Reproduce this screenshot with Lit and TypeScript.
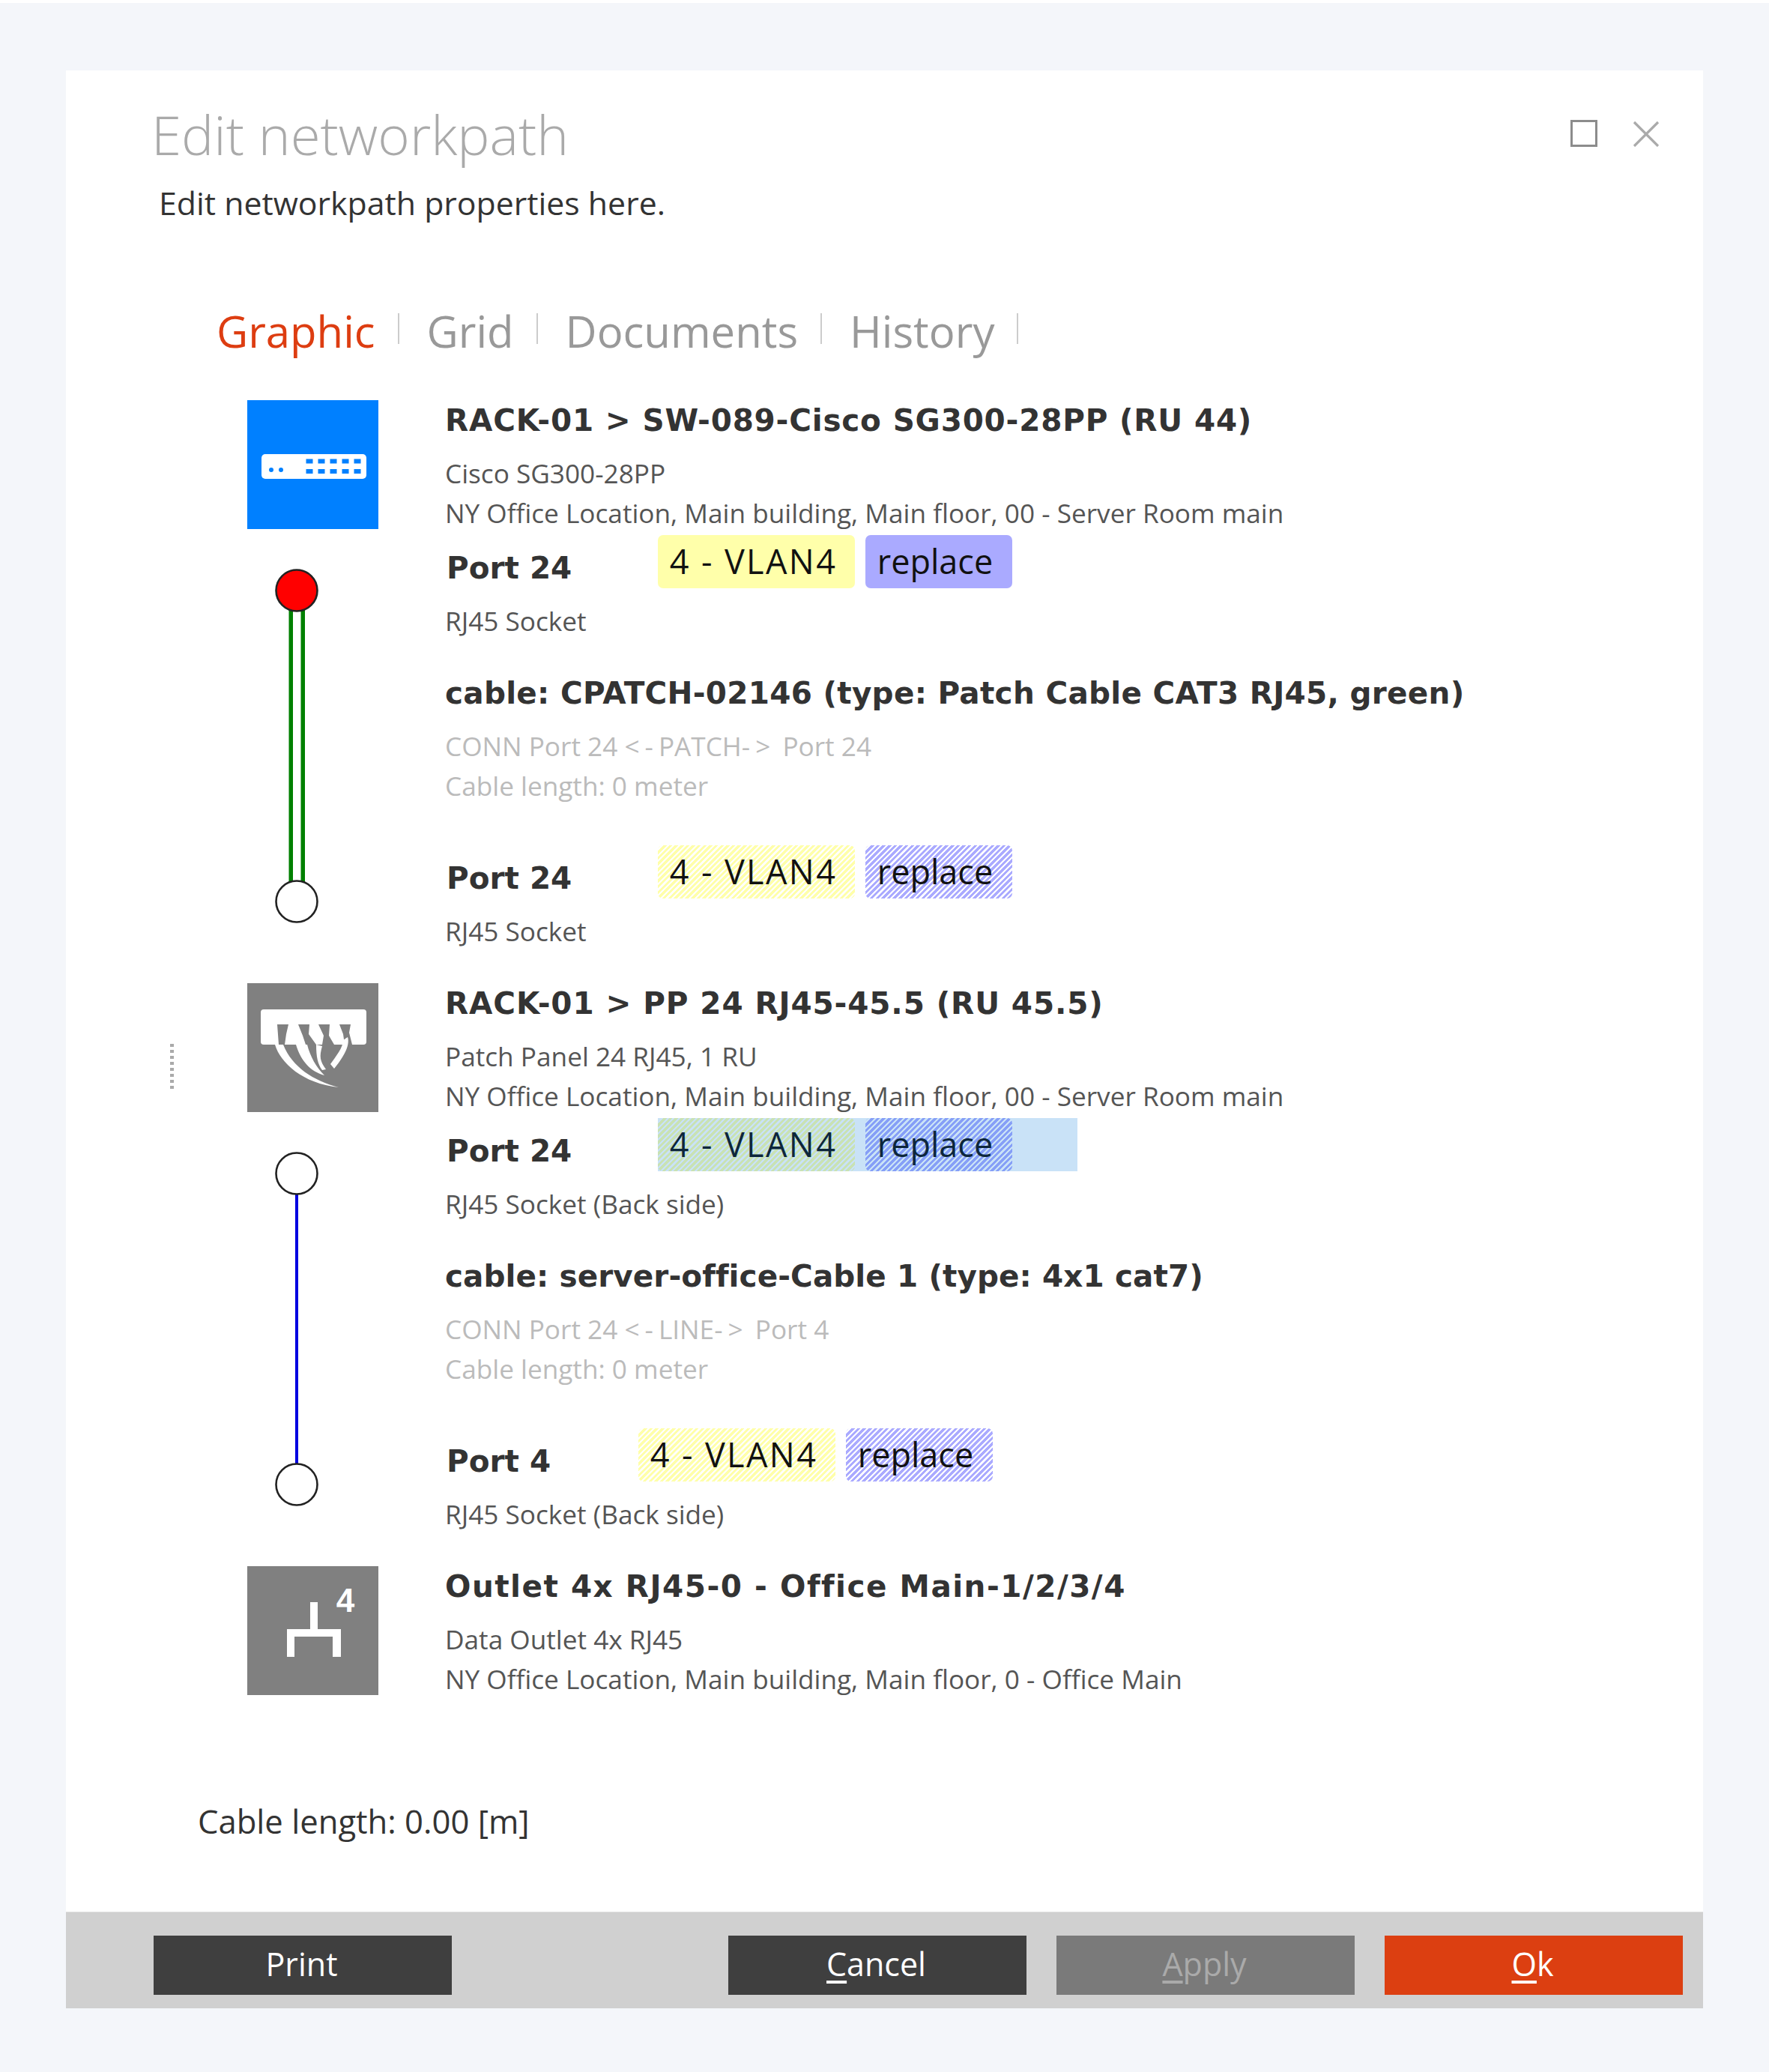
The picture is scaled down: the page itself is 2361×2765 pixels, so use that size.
import { LitElement, html, css, svg } from "lit";
import { customElement, property } from "lit/decorators.js";

const FONT = css`"Open Sans", "Noto Sans", sans-serif`;
const BOLD = css`"DejaVu Sans", "Open Sans", sans-serif`;

@customElement("port-row")
class PortRow extends LitElement {
  @property() label = "";
  @property() sub = "";
  @property({ type: Boolean }) hatched = false;
  @property({ type: Boolean }) selected = false;
  @property({ type: Boolean }) short = false;
  static styles = css`
    :host { display: block; font-family: ${FONT}; }
    .row { display: flex; align-items: flex-start; height: 73px; padding-top: 2px; box-sizing: border-box; }
    .label { font-family: ${BOLD}; font-weight: 700; font-size: 40.5px; line-height: 54px; color: #333; margin-top: 17px; margin-left: 2px; width: 280px; flex: none; }
    .label.short { width: 254px; }
    .badges { display: flex; gap: 14px; position: relative; margin-left: 2px; }
    .badges.selected { width: 560px; }
    .badges.selected::after { content: ""; position: absolute; inset: 0; background: rgba(0, 120, 215, 0.21); }
    .badge { height: 71px; line-height: 70px; font-size: 45px; color: #111; text-align: center; border-radius: 7px; box-sizing: border-box; }
    .vlan { width: 263px; background: #ffffaa; letter-spacing: 2.4px; padding-right: 8px; }
    .rep { width: 196px; background: #aaaaff; padding-right: 10px; }
    .hatched .vlan { background: repeating-linear-gradient(135deg, #ffffaa 0 3.2px, #ffffff 3.2px 5.4px); }
    .hatched .rep { background: repeating-linear-gradient(135deg, #aaaaff 0 3.2px, #ffffff 3.2px 5.4px); }
    .selected.hatched .vlan { background: repeating-linear-gradient(135deg, #ffffaa 0 3.2px, transparent 3.2px 5.4px); }
    .selected.hatched .rep { background: repeating-linear-gradient(135deg, #aaaaff 0 3.2px, transparent 3.2px 5.4px); }
    .sub { font-size: 35.2px; line-height: 53px; color: #555; margin-top: 17px; }
  `;
  render() {
    const cls = `badges ${this.hatched ? "hatched" : ""} ${this.selected ? "selected" : ""}`;
    return html`<div class="row">
        <div class="label ${this.short ? "short" : ""}">${this.label}</div>
        <div class=${cls}><div class="badge vlan">4 - VLAN4</div><div class="badge rep">replace</div></div>
      </div>
      <div class="sub">${this.sub}</div>`;
  }
}

@customElement("device-row")
class DeviceRow extends LitElement {
  @property() name = "";
  @property() model = "";
  @property() place = "";
  @property({ type: Number }) track = 0;
  static styles = css`
    :host { display: flex; height: 178px; font-family: ${FONT}; }
    .icon { width: 175px; height: 172px; flex: none; margin-right: 89px; }
    .icon ::slotted(svg) { display: block; }
    .title { font-family: ${BOLD}; font-weight: 700; font-size: 40.5px; line-height: 54px; color: #333; white-space: nowrap; }
    .sub { font-size: 35.2px; line-height: 53px; color: #555; white-space: nowrap; }
    .first { margin-top: 17px; }
  `;
  render() {
    return html`<div class="icon"><slot></slot></div>
      <div>
        <div class="title" style="letter-spacing:${this.track}px">${this.name}</div>
        <div class="sub first">${this.model}</div>
        <div class="sub">${this.place}</div>
      </div>`;
  }
}

@customElement("path-segment")
class PathSegment extends LitElement {
  @property() kind = "patch";
  @property() cableName = "";
  @property() from = "";
  @property() link = "";
  @property() to = "";
  @property({ type: Number }) track = 0;
  static styles = css`
    :host { display: flex; height: 600px; font-family: ${FONT}; }
    svg { flex: none; display: block; }
    .cable { margin-top: 43px; }
    .title { font-family: ${BOLD}; font-weight: 700; font-size: 40.5px; line-height: 54px; color: #333; white-space: nowrap; }
    .sub { font-size: 35.2px; line-height: 53px; color: #bbb; white-space: nowrap; }
    .first { margin-top: 17px; }
    .arrow { letter-spacing: 7px; }
    .end { margin-top: 51px; }
  `;
  render() {
    const patch = this.kind === "patch";
    return html`<svg width="264" height="600" viewBox="0 0 264 600">
        ${patch
          ? svg`<rect x="55.5" y="100" width="5.5" height="370" fill="#008000"/><rect x="71.5" y="100" width="5.5" height="370" fill="#008000"/>`
          : svg`<rect x="64" y="100" width="4" height="370" fill="#0000e0"/>`}
        <circle cx="66" cy="76" r="27.5" fill=${patch ? "#ff0000" : "#fff"} stroke="#222" stroke-width="2.6"/>
        <circle cx="66" cy="491" r="27.5" fill="#fff" stroke="#222" stroke-width="2.6"/>
      </svg>
      <div>
        <slot name="top"></slot>
        <div class="cable">
          <div class="title" style="letter-spacing:${this.track}px">${this.cableName}</div>
          <div class="sub first">CONN ${this.from} <span class="arrow">&lt;-</span>${this.link}<span class="arrow">-&gt;</span> ${this.to}</div>
          <div class="sub">Cable length: 0 meter</div>
        </div>
        <div class="end"><slot name="bottom"></slot></div>
      </div>`;
  }
}

@customElement("app-root")
class AppRoot extends LitElement {
  static styles = css`
    :host { display: block; box-sizing: border-box; width: 2361px; height: 2765px; background: #f4f6fa; border-top: 4px solid #fff; padding: 90px 0 0 88px; font-family: ${FONT}; }
    .dialog { width: 2185px; height: 2586px; background: #fff; display: flex; flex-direction: column; position: relative; }
    .head { display: flex; justify-content: space-between; padding: 35px 58px 0 114px; }
    h1 { margin: 0; font-weight: 300; font-size: 72.6px; line-height: 100px; color: #aaa; }
    .desc { font-size: 42.8px; line-height: 60px; color: #333; margin: 12px 0 0 124px; }
    .ctrl { display: flex; gap: 47px; margin-top: 31px; height: 36px; }
    .tabs { display: flex; margin: 101px 0 0 201px; }
    .tab { font-size: 58px; line-height: 80px; color: #999; font-weight: 400; padding: 0 32px 0 37px; position: relative; white-space: nowrap; }
    .tab:first-child { padding-left: 0; }
    .tab::after { content: ""; position: absolute; right: 0; top: 16px; height: 41px; width: 2px; background: #ccc; }
    .tab.active { color: #dd3d11; }
    .path { margin: 52px 0 0 242px; }
    .handle { position: absolute; left: 139px; top: 1299px; width: 5px; height: 62px; background: repeating-linear-gradient(180deg, #aaa 0 4px, transparent 4px 8px); }
    .total { font-size: 43.6px; line-height: 60px; color: #333; margin: 132px 0 0 176px; }
    .foot { margin-top: auto; height: 129px; box-sizing: border-box; background: #d0d0d0; border-top: 1px solid #e0e0e0; padding: 31px 25px 0 117px; display: flex; gap: 40px; }
    .btn { width: 398px; height: 79px; line-height: 74px; text-align: center; font-size: 43px; color: #fff; background: #3f3f3f; border: 0; padding: 0 3px 3px 0; font-family: inherit; }
    .btn u { text-underline-offset: 6px; }
    .print { margin-right: 329px; }
    .apply { background: #7a7a7a; color: #aaa; }
    .ok { background: #dc3f11; }
  `;
  render() {
    return html`<div class="dialog">
      <div class="head">
        <h1>Edit networkpath</h1>
        <div class="ctrl">
          <svg width="36" height="36" viewBox="0 0 36 36"><rect x="1.5" y="1.5" width="33" height="33" fill="none" stroke="#8c8c8c" stroke-width="3"/></svg>
          <svg width="36" height="36" viewBox="0 0 36 36"><path d="M2 3 L34 35 M34 3 L2 35" fill="none" stroke="#aaa" stroke-width="3.2"/></svg>
        </div>
      </div>
      <div class="desc">Edit networkpath properties here.</div>
      <div class="tabs">
        <div class="tab active">Graphic</div>
        <div class="tab">Grid</div>
        <div class="tab">Documents</div>
        <div class="tab">History</div>
      </div>
      <div class="path">
        <device-row track="0.8" name="RACK-01 > SW-089-Cisco SG300-28PP (RU 44)" model="Cisco SG300-28PP" place="NY Office Location, Main building, Main floor, 00 - Server Room main">
          <svg width="175" height="172" viewBox="0 0 175 172">
            <rect width="175" height="172" fill="#0080ff"/>
            <rect x="19" y="72" width="140" height="33" rx="5" fill="#fff"/>
            <circle cx="32" cy="93" r="3" fill="#0080ff"/><circle cx="45" cy="93" r="3" fill="#0080ff"/>
            ${[83, 99, 115, 131, 147].map((x) => svg`<rect x=${x - 4.5} y="78.5" width="9" height="6" fill="#0080ff"/><rect x=${x - 4.5} y="92" width="9" height="6" fill="#0080ff"/>`)}
          </svg>
        </device-row>
        <path-segment track="0.28" kind="patch" cableName="cable: CPATCH-02146 (type: Patch Cable CAT3 RJ45, green)" from="Port 24" link="PATCH" to="Port 24">
          <port-row slot="top" label="Port 24" sub="RJ45 Socket"></port-row>
          <port-row slot="bottom" label="Port 24" sub="RJ45 Socket" hatched></port-row>
        </path-segment>
        <device-row track="0.88" name="RACK-01 > PP 24 RJ45-45.5 (RU 45.5)" model="Patch Panel 24 RJ45, 1 RU" place="NY Office Location, Main building, Main floor, 00 - Server Room main">
          <svg width="175" height="172" viewBox="0 0 175 172">
            <rect width="175" height="172" fill="#808080"/>
            <rect x="18" y="35" width="141" height="47" rx="4" fill="#fff"/>
            <path d="M40 55 H55 L52 68 L50 82 H42 Z M68 55 H83 L82 68 L92 82 H78 L74 70 Z M95 55 H110 L109 70 L116 82 H100 L102 70 Z M123 55 H138 L136 66 L140 82 H130 L128 68 Z" fill="#808080"/>
            <path d="M37 82 C44 106 74 134 122 139 C88 130 60 112 48 82 Z M65 82 C72 105 85 118 103 123 C92 112 84 98 80 82 Z M92 82 L100 84 C96 98 97 104 105 115 L100 116 C94 108 92 98 92 82 Z M128 76 L134 72 C138 84 126 102 116 114 L111 108 C118 98 128 86 128 76 Z" fill="#fff"/>
          </svg>
        </device-row>
        <path-segment track="0.08" kind="line" cableName="cable: server-office-Cable 1 (type: 4x1 cat7)" from="Port 24" link="LINE" to="Port 4">
          <port-row slot="top" label="Port 24" sub="RJ45 Socket (Back side)" hatched selected></port-row>
          <port-row slot="bottom" label="Port 4" sub="RJ45 Socket (Back side)" hatched short></port-row>
        </path-segment>
        <device-row track="1.5" name="Outlet 4x RJ45-0 - Office Main-1/2/3/4" model="Data Outlet 4x RJ45" place="NY Office Location, Main building, Main floor, 0 - Office Main">
          <svg width="175" height="172" viewBox="0 0 175 172">
            <rect width="175" height="172" fill="#808080"/>
            <path d="M84 48 H94 V84 H125 V121 H114 V94 H63 V121 H53 V84 H84 Z" fill="#fff"/>
            <text x="131" y="61" text-anchor="middle" font-family="Liberation Sans" font-weight="700" font-size="44" fill="#fff">4</text>
          </svg>
        </device-row>
      </div>
      <div class="handle"></div>
      <div class="total">Cable length: 0.00 [m]</div>
      <div class="foot">
        <button class="btn print">Print</button>
        <button class="btn"><u>C</u>ancel</button>
        <button class="btn apply"><u>A</u>pply</button>
        <button class="btn ok"><u>O</u>k</button>
      </div>
    </div>`;
  }
}
